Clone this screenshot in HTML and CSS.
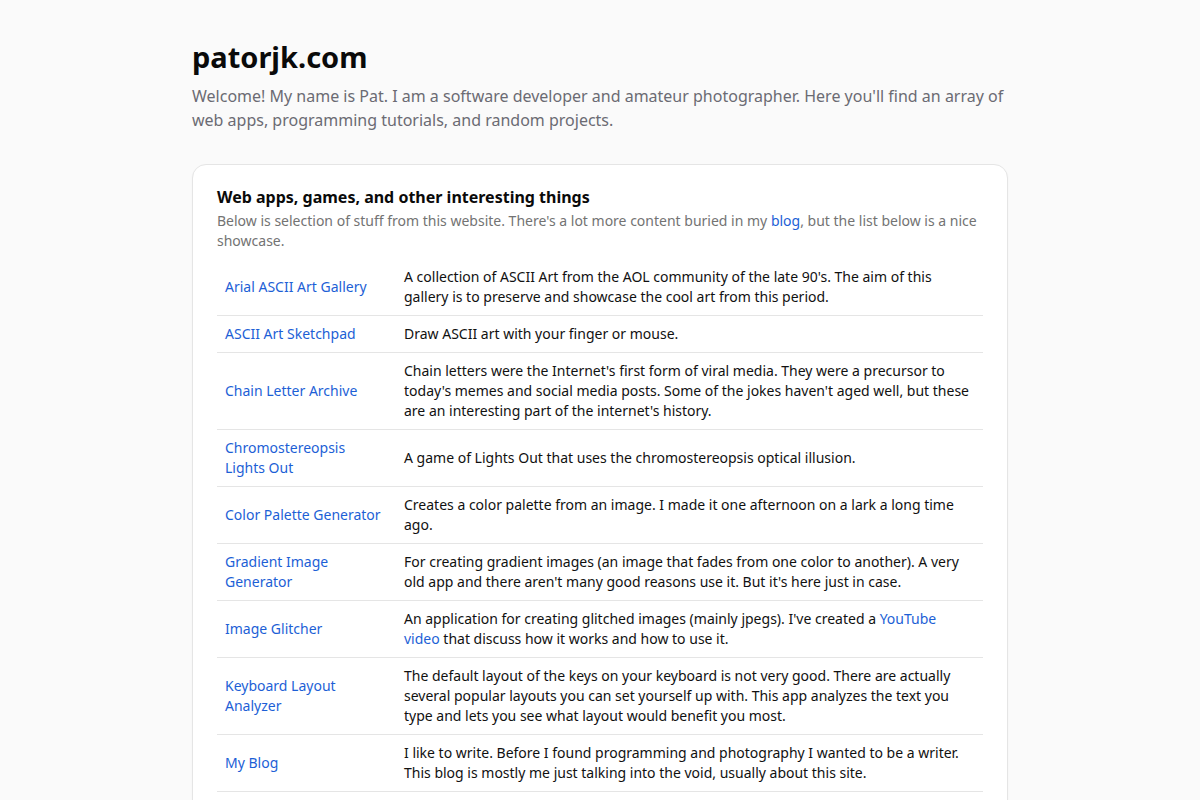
FILE: index.html
```html
<!DOCTYPE html>
<html lang="en">
<head>
<meta charset="UTF-8">
<meta name="viewport" content="width=device-width, initial-scale=1.0">
<title>patorjk.com</title>
<link rel="stylesheet" href="styles.css">
</head>
<body>

<div class="page">
  <header class="intro">
    <h1>patorjk.com</h1>
    <p>Welcome! My name is Pat. I am a software developer and amateur photographer. Here you'll find an array of web apps, programming tutorials, and random projects.</p>
  </header>

  <section class="card">
    <h2>Web apps, games, and other interesting things</h2>
    <p class="lead">Below is selection of stuff from this website. There's a lot more content buried in my <a href="#">blog</a>, but the list below is a nice showcase.</p>

    <table class="apps">
      <colgroup>
        <col class="col-name">
        <col>
      </colgroup>
      <tr>
        <td><a href="#">Arial ASCII Art Gallery</a></td>
        <td>A collection of ASCII Art from the AOL community of the late 90's. The aim of this gallery is to preserve and showcase the cool art from this period.</td>
      </tr>
      <tr>
        <td><a href="#">ASCII Art Sketchpad</a></td>
        <td>Draw ASCII art with your finger or mouse.</td>
      </tr>
      <tr>
        <td><a href="#">Chain Letter Archive</a></td>
        <td>Chain letters were the Internet's first form of viral media. They were a precursor to today's memes and social media posts. Some of the jokes haven't aged well, but these are an interesting part of the internet's history.</td>
      </tr>
      <tr>
        <td><a href="#">Chromostereopsis Lights Out</a></td>
        <td>A game of Lights Out that uses the chromostereopsis optical illusion.</td>
      </tr>
      <tr>
        <td><a href="#">Color Palette Generator</a></td>
        <td>Creates a color palette from an image. I made it one afternoon on a lark a long time ago.</td>
      </tr>
      <tr>
        <td><a href="#">Gradient Image Generator</a></td>
        <td>For creating gradient images (an image that fades from one color to another). A very old app and there aren't many good reasons use it. But it's here just in case.</td>
      </tr>
      <tr>
        <td><a href="#">Image Glitcher</a></td>
        <td>An application for creating glitched images (mainly jpegs). I've created a <a href="#">YouTube video</a> that discuss how it works and how to use it.</td>
      </tr>
      <tr>
        <td><a href="#">Keyboard Layout Analyzer</a></td>
        <td>The default layout of the keys on your keyboard is not very good. There are actually several popular layouts you can set yourself up with. This app analyzes the text you type and lets you see what layout would benefit you most.</td>
      </tr>
      <tr>
        <td><a href="#">My Blog</a></td>
        <td>I like to write. Before I found programming and photography I wanted to be a writer. This blog is mostly me just talking into the void, usually about this site.</td>
      </tr>
      <tr>
        <td><a href="#">Snake</a></td>
        <td>A version of the classic game Snake, playable in the browser.</td>
      </tr>
      <tr>
        <td><a href="#">Text to ASCII Art Generator</a></td>
        <td>Turn text into large letters made out of ASCII characters.</td>
      </tr>
    </table>
  </section>
</div>

</body>
</html>
```

FILE: styles.css
```css
* { margin: 0; padding: 0; box-sizing: border-box; }
body { font-family: "Noto Sans", "Open Sans", sans-serif; background: #fafafa; color: #111; }
a { color: #1d5fd6; text-decoration: none; }

.page { max-width: 816px; margin: 0 auto; padding: 39px 0 60px; }

.intro h1 { font-size: 29px; line-height: 36px; font-weight: 700; color: #0a0a0a; }
.intro p { margin-top: 9px; font-size: 16px; line-height: 24px; color: #6b6b73; }

.card {
  margin-top: 32px;
  background: #fff;
  border: 1px solid #e5e5e5;
  border-radius: 14px;
  padding: 20px 24px 16px;
  box-shadow: 0 1px 2px rgba(0, 0, 0, 0.04);
}
.card h2 { font-size: 16px; line-height: 24px; font-weight: 700; color: #0a0a0a; }
.card .lead { margin-top: 2px; font-size: 14px; line-height: 20px; color: #737373; }

.apps { width: 100%; margin-top: 8px; border-collapse: collapse; table-layout: fixed; font-size: 14px; line-height: 20px; }
.apps .col-name { width: 179px; }
.apps td { padding: 8px; vertical-align: middle; border-bottom: 1px solid #e5e5e5; }
```
